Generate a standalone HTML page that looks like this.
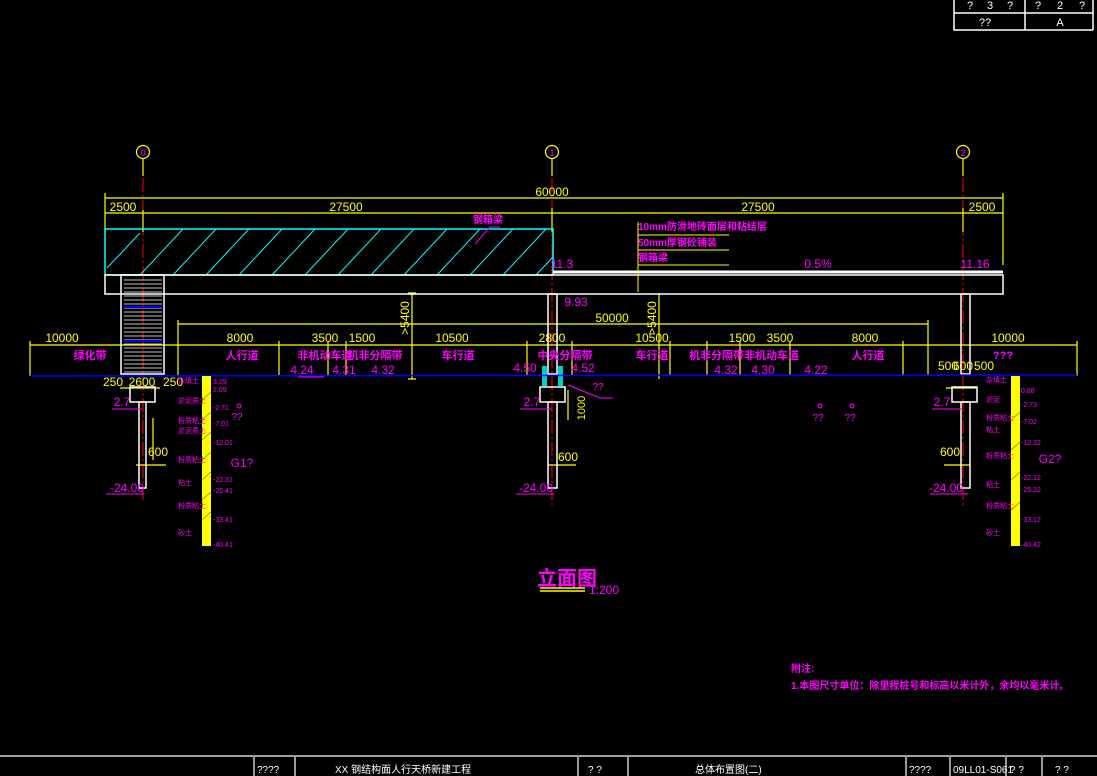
<!DOCTYPE html>
<html><head><meta charset="utf-8"><style>
html,body{margin:0;padding:0;background:#000;}
svg{display:block}
text{font-family:"Liberation Sans Narrow","Liberation Sans","Noto Sans CJK SC",sans-serif;}
</style></head><body>
<svg width="1097" height="776" viewBox="0 0 1097 776" xmlns="http://www.w3.org/2000/svg">
<rect width="1097" height="776" fill="#000"/>
<!-- top-right table -->
<g stroke="#fff" stroke-width="1.5" fill="none">
<path d="M954 0V30H1093 M954 13H1093 M1025 0V30 M1093 0V30"/>
</g>
<g fill="#fff" font-size="11" text-anchor="middle">
<text x="970" y="9">?</text><text x="990" y="9">3</text><text x="1010" y="9">?</text>
<text x="1038" y="9">?</text><text x="1060" y="9">2</text><text x="1082" y="9">?</text>
<text x="985" y="26">??</text><text x="1060" y="26">A</text>
</g>
<!-- axis bubbles -->
<g stroke="#ff0" fill="none" stroke-width="1.2">
<circle cx="143" cy="152" r="6.5"/><circle cx="552" cy="152" r="6.5"/><circle cx="963" cy="152" r="6.5"/>
<path d="M143 158.5V176 M552 158.5V176 M963 158.5V176"/>
</g>
<g fill="#f0f" font-size="9" text-anchor="middle">
<text x="143" y="156">0</text><text x="552" y="156">1</text><text x="963" y="156">2</text>
</g>
<!-- red centerlines -->
<g stroke="#f00" stroke-width="1" stroke-dasharray="14,3,2,3">
<path d="M143 178V500 M552 178V505 M963 178V505"/>
</g>
<!-- top dims -->
<g stroke="#ff0" stroke-width="1.2" fill="none">
<path d="M105 198H1003 M105 213H1003 M105 193V232 M143 210V232 M552 208V232 M963 208V232 M1003 193V265"/>
<path d="M178 324H928 M30 345H1077 M178 320V376 M928 320V376"/>
<path d="M30 341V376 M279 341V376 M328 341V376 M346 341V376 M527 341V376 M572 341V376 M670 341V376 M707 341V376 M740 341V376 M790 341V376 M903 341V376 M1077 341V376"/>
<path d="M412 293V379 M408 293H416 M408 379H416"/>
<path d="M659 293V379"/>
<path d="M568 390V420"/>
<path d="M136 465H166 M548 465H576 M944 465H970 M153 418V460"/>
<path d="M120 388H160 M946 388H977"/>
</g>
<g fill="#ff0" font-size="12" text-anchor="middle">
<text x="552" y="196">60000</text>
<text x="123" y="211">2500</text><text x="346" y="211">27500</text><text x="758" y="211">27500</text><text x="982" y="211">2500</text>
<text x="612" y="322">50000</text>
<text x="62" y="342">10000</text><text x="240" y="342">8000</text><text x="325" y="342">3500</text><text x="362" y="342">1500</text>
<text x="452" y="342">10500</text><text x="552" y="342">2800</text><text x="652" y="342">10500</text><text x="742" y="342">1500</text>
<text x="780" y="342">3500</text><text x="865" y="342">8000</text><text x="1008" y="342">10000</text>
<text x="113" y="386">250</text><text x="142" y="386">2600</text><text x="173" y="386">250</text>
<text x="948" y="370">500</text><text x="963" y="370">600</text><text x="984" y="370">500</text>
<text x="158" y="456">600</text><text x="568" y="461">600</text><text x="950" y="456">600</text>
<text transform="translate(409,318) rotate(-90)">&gt;5400</text>
<text transform="translate(656,318) rotate(-90)">&gt;5400</text>
<text transform="translate(585,408) rotate(-90)" font-size="11">1000</text>
</g>
<!-- deck -->
<rect x="105" y="229" width="448" height="46" fill="none" stroke="#0ff" stroke-width="1.5"/>
<g stroke="#0ff" stroke-width="1">
<path d="M107 268L140 233 M140 275L183 229 M173 275L216 229 M206 275L249 229 M239 275L282 229 M272 275L315 229 M305 275L348 229 M338 275L381 229 M371 275L414 229 M404 275L447 229 M437 275L480 229 M470 275L513 229 M503 275L546 229 M536 275L553 257"/>
</g>
<g stroke="#fff" fill="none" stroke-width="1.5">
<rect x="105" y="275" width="898" height="19"/>
<path d="M553 272H1003" stroke-width="3"/>
<rect x="121" y="275" width="43" height="99"/>
<rect x="548" y="294" width="9" height="80"/>
<rect x="961" y="294" width="9" height="80"/>
<rect x="130" y="387" width="25" height="15"/>
<rect x="540" y="387" width="25" height="15"/>
<rect x="952" y="387" width="25" height="15"/>
<rect x="139" y="402" width="7" height="86"/>
<rect x="548" y="402" width="9" height="86"/>
<rect x="961" y="402" width="9" height="86"/>
</g>
<g stroke="#fff" stroke-width="0.8">
<path d="M124 280H162 M124 284H162 M124 288H162 M124 292H162 M124 296H162 M124 300H162 M124 304H162 M124 308H162 M124 312H162 M124 316H162 M124 320H162 M124 324H162 M124 328H162 M124 332H162 M124 336H162 M124 340H162 M124 344H162 M124 348H162 M124 352H162 M124 356H162 M124 360H162 M124 364H162 M124 368H162 M124 372H162"/>
</g>
<path d="M124 307H162 M124 341H162" stroke="#00f" stroke-width="2"/>
<rect x="542" y="366" width="5" height="20" fill="#0cc"/><rect x="558" y="366" width="5" height="20" fill="#0cc"/>
<!-- ground -->
<path d="M30 376L1077 375" stroke="#00f" stroke-width="1.5"/>
<!-- soil columns -->
<rect x="202" y="376" width="9" height="170" fill="#ff0"/>
<rect x="1011" y="376" width="9" height="170" fill="#ff0"/>
<g stroke="#880" stroke-width="0.8"><path d="M202 400L211 392 M202 420L211 412 M202 440L211 432 M202 460L211 452 M202 480L211 472 M202 500L211 492 M202 520L211 512 M1011 420L1020 412 M1011 450L1020 442 M1011 480L1020 472 M1011 510L1020 502"/></g>
<!-- magenta -->
<g fill="#f0f" font-size="11" text-anchor="middle" font-weight="bold">
<text x="90" y="359">绿化带</text><text x="242" y="359">人行道</text><text x="325" y="359">非机动车道</text><text x="375" y="359">机非分隔带</text>
<text x="458" y="359">车行道</text><text x="565" y="359">中央分隔带</text><text x="652" y="359">车行道</text><text x="744" y="359">机非分隔带非机动车道</text>
<text x="868" y="359">人行道</text><text x="1003" y="359">???</text>
<text x="488" y="223" font-size="10">钢箱梁</text>
<text x="638" y="230" font-size="10" text-anchor="start">10mm防滑地砖面层和粘结层</text>
<text x="638" y="246" font-size="10" text-anchor="start">50mm厚钢砼铺装</text>
<text x="638" y="261" font-size="10" text-anchor="start">钢箱梁</text>
</g>
<g stroke="#ff0" stroke-width="1" fill="none"><path d="M638 235H729 M638 250H729 M638 265H729 M638 222V292"/></g>
<path d="M475 244L490 227H500" stroke="#f0f" fill="none"/>
<g fill="#f0f" font-size="12" text-anchor="middle">
<text x="562" y="268">11.3</text><text x="975" y="268">11.16</text><text x="818" y="268">0.5%</text>
<text x="576" y="306">9.93</text>
<text x="302" y="374">4.24</text><text x="344" y="374">4.31</text><text x="383" y="374">4.32</text><text x="525" y="372">4.50</text><text x="583" y="372">4.52</text>
<text x="726" y="374">4.32</text><text x="763" y="374">4.30</text><text x="816" y="374">4.22</text>
<text x="122" y="406">2.7</text><text x="532" y="406">2.7</text><text x="942" y="406">2.7</text>
<text x="127" y="492">-24.00</text><text x="536" y="492">-24.00</text><text x="946" y="492">-24.00</text>
<text x="598" y="390" font-size="10">??</text>
<text x="237" y="420" font-size="10">??</text><text x="818" y="421" font-size="10">??</text><text x="850" y="421" font-size="10">??</text>
<text x="242" y="467">G1?</text><text x="1050" y="463">G2?</text>
</g>
<g stroke="#f0f" fill="none"><path d="M112 409H142 M520 409H552 M932 409H962 M106 494H144 M516 494H554 M930 494H968 M298 377H324 M568 385L600 398H613"/>
<circle cx="239" cy="406" r="2"/><circle cx="820" cy="406" r="2"/><circle cx="852" cy="406" r="2"/></g>
<g fill="#f0f" font-size="7">
<text x="213" y="384">3.29</text><text x="213" y="392">2.09</text><text x="213" y="410">-2.71</text><text x="213" y="426">-7.01</text><text x="213" y="445">-12.01</text>
<text x="213" y="482">-22.31</text><text x="213" y="493">-25.41</text><text x="213" y="522">-33.41</text><text x="213" y="547">-40.41</text>
<text x="1021" y="393">0.88</text><text x="1021" y="407">-2.73</text><text x="1021" y="424">-7.02</text><text x="1021" y="445">-12.32</text>
<text x="1021" y="480">-22.12</text><text x="1021" y="492">-25.32</text><text x="1021" y="522">-33.12</text><text x="1021" y="547">-40.42</text>
<text x="178" y="383">杂填土</text><text x="178" y="403">淤泥质土</text><text x="178" y="423">粉质粘土</text><text x="178" y="433">淤泥质土</text>
<text x="178" y="462">粉质粘土</text><text x="178" y="485">粘土</text><text x="178" y="508">粉质粘土</text><text x="178" y="535">砂土</text>
<text x="986" y="382">杂填土</text><text x="986" y="402">淤泥</text><text x="986" y="420">粉质粘土</text><text x="986" y="432">粘土</text>
<text x="986" y="458">粉质粘土</text><text x="986" y="487">粘土</text><text x="986" y="508">粉质粘土</text><text x="986" y="535">砂土</text>
</g>
<!-- title -->
<text x="537" y="585" fill="#f0f" font-size="20" font-weight="bold" font-family="'Noto Sans CJK SC',sans-serif">立面图</text>
<path d="M540 588H585 M540 591H585" stroke="#ff0" stroke-width="1.5"/>
<text x="589" y="594" fill="#f0f" font-size="12">1:200</text>
<text x="791" y="672" fill="#f0f" font-size="10" font-weight="bold">附注:</text>
<text x="791" y="689" fill="#f0f" font-size="10" font-weight="bold">1.本图尺寸单位：除里程桩号和标高以米计外，余均以毫米计。</text>
<!-- bottom title block -->
<g stroke="#fff" stroke-width="1.2" fill="none">
<path d="M0 756H1097 M254 757V776 M295 757V776 M578 757V776 M628 757V776 M906 757V776 M950 757V776 M1006 757V776 M1042 757V776"/>
</g>
<g fill="#fff" font-size="10">
<text x="257" y="773">????</text><text x="335" y="773">XX 钢结构面人行天桥新建工程</text>
<text x="588" y="773">? ?</text><text x="695" y="773">总体布置图(二)</text>
<text x="909" y="773">????</text><text x="953" y="773">09LL01-S061</text><text x="1010" y="773">? ?</text><text x="1055" y="773">? ?</text>
</g>
</svg>
</body></html>
